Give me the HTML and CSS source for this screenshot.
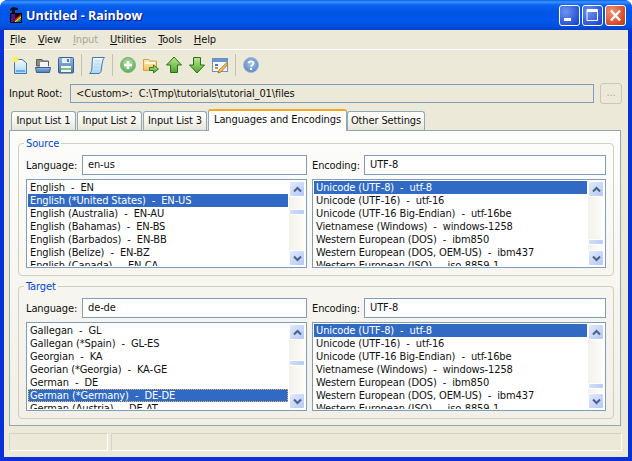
FILE: index.html
```html
<!DOCTYPE html>
<html lang="en">
<head>
    <meta charset="UTF-8">
    <meta name="viewport" content="width=device-width, initial-scale=1.0">
    <title>Untitled - Rainbow</title>
    <link rel="stylesheet" href="styles.css">
</head>
<body>
    <div class="window">
        <div class="titlebar">
            <svg class="app-icon" width="14" height="16" viewBox="0 0 14 16">
                <rect x="1" y="6" width="12" height="10" fill="#000"/>
                <path d="M3 15 L12 7 L12 9 L5 15Z" fill="#e02020"/>
                <path d="M5 15 L12 9 L12 11 L7 15Z" fill="#f0e020"/>
                <path d="M7 15 L12 11 L12 13 L9 15Z" fill="#20c040"/>
                <path d="M9 15 L12 13 L12 15Z" fill="#2040e0"/>
                <path d="M2 7 h4 v8 h-4z" fill="#601080"/>
                <path d="M1 2 L4 0 L9 1 L9 3 L6 3 L6 6 L3 6 L3 3 L1 4Z" fill="#111"/>
            </svg>
            <span class="title-text">Untitled - Rainbow</span>
            <div class="caption-buttons">
                <div class="caption-btn">
                    <svg width="19" height="19" viewBox="0 0 19 19"><rect x="4" y="12" width="7" height="3" fill="#fff"/></svg>
                </div>
                <div class="caption-btn">
                    <svg width="19" height="19" viewBox="0 0 19 19"><path d="M4 3.500h10.500v11h-10.500z M4 5.500h10.500" fill="none" stroke="#fff" stroke-width="1"/><rect x="4" y="4" width="11" height="2" fill="#fff"/></svg>
                </div>
                <div class="caption-btn close">
                    <svg width="19" height="19" viewBox="0 0 19 19"><path d="M5 4.500 L14 14.500 M14 4.500 L5 14.500" stroke="#fff" stroke-width="2.400" fill="none"/></svg>
                </div>
            </div>
        </div>

        <div class="client">
            <div class="menubar">
                <span class="menu-item"><u>F</u>ile</span>
                <span class="menu-item"><u>V</u>iew</span>
                <span class="menu-item disabled"><u>I</u>nput</span>
                <span class="menu-item"><u>U</u>tilities</span>
                <span class="menu-item"><u>T</u>ools</span>
                <span class="menu-item"><u>H</u>elp</span>
            </div>

            <div class="toolbar">
                <svg class="tool-icon" viewBox="0 0 16 18">
                    <defs>
                        <linearGradient id="paleBlue" x1="0" y1="0" x2="0" y2="1"><stop offset="0" stop-color="#f4fbff"/><stop offset="1" stop-color="#a9d6f3"/></linearGradient>
                        <linearGradient id="steel" x1="0" y1="0" x2="0" y2="1"><stop offset="0" stop-color="#9ab8dc"/><stop offset="1" stop-color="#4a78b4"/></linearGradient>
                        <linearGradient id="leaf" x1="0" y1="0" x2="0" y2="1"><stop offset="0" stop-color="#b8e890"/><stop offset="1" stop-color="#4fa52a"/></linearGradient>
                        <linearGradient id="amber" x1="0" y1="0" x2="0" y2="1"><stop offset="0" stop-color="#fff0b8"/><stop offset="1" stop-color="#f0c060"/></linearGradient>
                        <radialGradient id="bubble" cx="0.5" cy="0.4" r="0.6"><stop offset="0" stop-color="#c8e8b8"/><stop offset="1" stop-color="#58a850"/></radialGradient>
                        <radialGradient id="helpBall" cx="0.5" cy="0.4" r="0.6"><stop offset="0" stop-color="#a8c4e8"/><stop offset="1" stop-color="#5a86c4"/></radialGradient>
                    </defs>
                    <path d="M2.500 3.500H10L14.500 7V17.500H2.500Z" fill="url(#paleBlue)" stroke="#3f79b8"/>
                    <rect x="4" y="14" width="9" height="2" fill="#62b0e8"/>
                    <circle cx="3.500" cy="3.500" r="3" fill="#ffef60"/>
                </svg>
                <svg class="tool-icon" viewBox="0 0 16 18">
                    <path d="M1.500 3.500H7L8 5H13.500V10H1.500Z" fill="#8a8a84" stroke="#5c5c58"/>
                    <rect x="5" y="6" width="8" height="5" fill="#f4f4f0"/>
                    <path d="M0.500 11.500H15.500L14.500 16.500H1.500Z" fill="url(#steel)" stroke="#2f5f9c"/>
                </svg>
                <svg class="tool-icon" viewBox="0 0 16 18">
                    <rect x="0.500" y="1.500" width="15" height="15.500" rx="1" fill="url(#steel)" stroke="#2f5f9c"/>
                    <rect x="4" y="2" width="8" height="5" fill="#e8eef8"/>
                    <rect x="9" y="3" width="2" height="3" fill="#4a78b4"/>
                    <rect x="3" y="10" width="10" height="6" fill="#f4f8f0"/>
                    <rect x="3" y="12" width="10" height="2" fill="#8cc070"/>
                </svg>
                <div class="tool-sep"></div>
                <svg class="tool-icon" viewBox="0 0 16 18">
                    <path d="M3.500 1.500H15.500C14 3 13.500 5 13 8L12 15.500C11.800 17 10.500 17.500 9 17.500H0.500C2 16.500 2.500 15 2.800 13Z" fill="url(#paleBlue)" stroke="#3f79b8"/>
                    <path d="M6 5H11M5.500 8H10.500M5 11H10" stroke="#b4d2ec" stroke-width="1"/>
                </svg>
                <div class="tool-sep"></div>
                <svg class="tool-icon" viewBox="0 0 16 18">
                    <circle cx="8" cy="9" r="7.500" fill="url(#bubble)" stroke="#7cb878"/>
                    <path d="M8 5V13M4 9H12" stroke="#fff" stroke-width="2.600"/>
                </svg>
                <svg class="tool-icon" viewBox="0 0 16 18">
                    <path d="M0.500 3.500H6L7 5H13.500V14.500H0.500Z" fill="url(#amber)" stroke="#d8a040"/>
                    <rect x="2" y="6" width="10" height="2" fill="#fff8e0"/>
                    <path d="M6.500 11.500H10.500V9L15.500 13L10.500 17V14.500H6.500Z" fill="url(#leaf)" stroke="#3c7a28"/>
                </svg>
                <svg class="tool-icon" viewBox="0 0 16 18">
                    <path d="M8 1L15.500 9H11.500V16.500H4.500V9H0.500Z" fill="url(#leaf)" stroke="#2e7018"/>
                </svg>
                <svg class="tool-icon" viewBox="0 0 16 18">
                    <path d="M8 17L15.500 9H11.500V1.500H4.500V9H0.500Z" fill="url(#leaf)" stroke="#2e7018"/>
                </svg>
                <svg class="tool-icon" viewBox="0 0 16 18">
                    <rect x="0.500" y="2.500" width="15" height="13" fill="#f4f8fc" stroke="#6a90c0"/>
                    <rect x="1" y="3" width="14" height="3" fill="#6a96d0"/>
                    <rect x="3" y="8" width="3" height="2" fill="#4a78b4"/>
                    <rect x="3" y="11" width="3" height="2" fill="#f08030"/>
                    <path d="M15 6.500L16 8L9 16L6 17L7 14Z" fill="#f4c050" stroke="#a06820" stroke-width="0.800"/>
                </svg>
                <div class="tool-sep"></div>
                <svg class="tool-icon" viewBox="0 0 16 18">
                    <circle cx="8" cy="9" r="7.500" fill="url(#helpBall)" stroke="#9cb8dc"/>
                    <path d="M5.700 7.300C5.700 4.800 10.500 4.800 10.500 7.300C10.500 9 8.100 9 8.100 10.800" fill="none" stroke="#fff" stroke-width="1.800"/>
                    <rect x="7.100" y="12" width="2" height="2" fill="#fff"/>
                </svg>
            </div>

            <div class="root-row">
                <span class="root-label">Input Root:</span>
                <div class="root-field">&lt;Custom&gt;:&nbsp; C:\Tmp\tutorials\tutorial_01\files</div>
                <div class="browse-btn">...</div>
            </div>

            <div class="tabs">
                <div class="tab tab-list1">Input List 1</div>
                <div class="tab tab-list2">Input List 2</div>
                <div class="tab tab-list3">Input List 3</div>
                <div class="tab active">Languages and Encodings</div>
                <div class="tab tab-other">Other Settings</div>
            </div>

            <div class="panel">
                <fieldset class="group">
                    <legend>Source</legend>
                    <div class="group-grid">
                        <div class="field lang-field">
                            <label>Language:</label>
                            <div class="input">en-us</div>
                        </div>
                        <div class="field enc-field">
                            <label>Encoding:</label>
                            <div class="input">UTF-8</div>
                        </div>
                        <div class="listbox">
                            <div class="list-items">
                                <div class="row">English&nbsp; -&nbsp; EN</div>
                                <div class="row selected">English (*United States)&nbsp; -&nbsp; EN-US</div>
                                <div class="row">English (Australia)&nbsp; -&nbsp; EN-AU</div>
                                <div class="row">English (Bahamas)&nbsp; -&nbsp; EN-BS</div>
                                <div class="row">English (Barbados)&nbsp; -&nbsp; EN-BB</div>
                                <div class="row">English (Belize)&nbsp; -&nbsp; EN-BZ</div>
                                <div class="row">English (Canada)&nbsp; -&nbsp; EN-CA</div>
                            </div>
                            <div class="scrollbar">
                                <div class="sb-btn">
                                    <svg width="9" height="7" viewBox="0 0 9 7"><path d="M1 5.500L4.500 2L8 5.500" fill="none" stroke="#4d6185" stroke-width="2"/></svg>
                                </div>
                                <div class="thumb thumb-12"></div>
                                <div class="sb-btn">
                                    <svg width="9" height="7" viewBox="0 0 9 7"><path d="M1 1.500L4.500 5L8 1.500" fill="none" stroke="#4d6185" stroke-width="2"/></svg>
                                </div>
                            </div>
                        </div>
                        <div class="listbox">
                            <div class="list-items">
                                <div class="row selected">Unicode (UTF-8)&nbsp; -&nbsp; utf-8</div>
                                <div class="row">Unicode (UTF-16)&nbsp; -&nbsp; utf-16</div>
                                <div class="row">Unicode (UTF-16 Big-Endian)&nbsp; -&nbsp; utf-16be</div>
                                <div class="row">Vietnamese (Windows)&nbsp; -&nbsp; windows-1258</div>
                                <div class="row">Western European (DOS)&nbsp; -&nbsp; ibm850</div>
                                <div class="row">Western European (DOS, OEM-US)&nbsp; -&nbsp; ibm437</div>
                                <div class="row">Western European (ISO)&nbsp; -&nbsp; iso-8859-1</div>
                            </div>
                            <div class="scrollbar">
                                <div class="sb-btn">
                                    <svg width="9" height="7" viewBox="0 0 9 7"><path d="M1 5.500L4.500 2L8 5.500" fill="none" stroke="#4d6185" stroke-width="2"/></svg>
                                </div>
                                <div class="thumb thumb-42"></div>
                                <div class="sb-btn">
                                    <svg width="9" height="7" viewBox="0 0 9 7"><path d="M1 1.500L4.500 5L8 1.500" fill="none" stroke="#4d6185" stroke-width="2"/></svg>
                                </div>
                            </div>
                        </div>
                    </div>
                </fieldset>

                <fieldset class="group target">
                    <legend>Target</legend>
                    <div class="group-grid">
                        <div class="field lang-field">
                            <label>Language:</label>
                            <div class="input">de-de</div>
                        </div>
                        <div class="field enc-field">
                            <label>Encoding:</label>
                            <div class="input">UTF-8</div>
                        </div>
                        <div class="listbox">
                            <div class="list-items">
                                <div class="row">Gallegan&nbsp; -&nbsp; GL</div>
                                <div class="row">Gallegan (*Spain)&nbsp; -&nbsp; GL-ES</div>
                                <div class="row">Georgian&nbsp; -&nbsp; KA</div>
                                <div class="row">Georian (*Georgia)&nbsp; -&nbsp; KA-GE</div>
                                <div class="row">German&nbsp; -&nbsp; DE</div>
                                <div class="row selected focused">German (*Germany)&nbsp; -&nbsp; DE-DE</div>
                                <div class="row">German (Austria)&nbsp; -&nbsp; DE-AT</div>
                            </div>
                            <div class="scrollbar">
                                <div class="sb-btn">
                                    <svg width="9" height="7" viewBox="0 0 9 7"><path d="M1 5.500L4.500 2L8 5.500" fill="none" stroke="#4d6185" stroke-width="2"/></svg>
                                </div>
                                <div class="thumb thumb-20"></div>
                                <div class="sb-btn">
                                    <svg width="9" height="7" viewBox="0 0 9 7"><path d="M1 1.500L4.500 5L8 1.500" fill="none" stroke="#4d6185" stroke-width="2"/></svg>
                                </div>
                            </div>
                        </div>
                        <div class="listbox">
                            <div class="list-items">
                                <div class="row selected">Unicode (UTF-8)&nbsp; -&nbsp; utf-8</div>
                                <div class="row">Unicode (UTF-16)&nbsp; -&nbsp; utf-16</div>
                                <div class="row">Unicode (UTF-16 Big-Endian)&nbsp; -&nbsp; utf-16be</div>
                                <div class="row">Vietnamese (Windows)&nbsp; -&nbsp; windows-1258</div>
                                <div class="row">Western European (DOS)&nbsp; -&nbsp; ibm850</div>
                                <div class="row">Western European (DOS, OEM-US)&nbsp; -&nbsp; ibm437</div>
                                <div class="row">Western European (ISO)&nbsp; -&nbsp; iso-8859-1</div>
                            </div>
                            <div class="scrollbar">
                                <div class="sb-btn">
                                    <svg width="9" height="7" viewBox="0 0 9 7"><path d="M1 5.500L4.500 2L8 5.500" fill="none" stroke="#4d6185" stroke-width="2"/></svg>
                                </div>
                                <div class="thumb thumb-43"></div>
                                <div class="sb-btn">
                                    <svg width="9" height="7" viewBox="0 0 9 7"><path d="M1 1.500L4.500 5L8 1.500" fill="none" stroke="#4d6185" stroke-width="2"/></svg>
                                </div>
                            </div>
                        </div>
                    </div>
                </fieldset>
            </div>

            <div class="statusbar">
                <div class="status-pane first"></div>
                <div class="status-pane second"></div>
            </div>
        </div>
    </div>
</body>
</html>
```

FILE: styles.css
```css
* {
    box-sizing: border-box;
}

body {
    margin: 0;
    overflow: hidden;
    background-color: #fff;
    font-family: "DejaVu Sans", sans-serif;
    font-stretch: condensed;
    font-size: 11px;
    letter-spacing: -0.120px;
    color: #111;
}

.window {
    width: 632px;
    height: 461px;
    display: flex;
    flex-direction: column;
    background-color: #0831d9;
    border-radius: 8px 8px 0 0;
    overflow: hidden;
}

/* title bar */
.titlebar {
    height: 30px;
    flex: none;
    display: flex;
    align-items: center;
    padding: 0 6px 0 9px;
    background: linear-gradient(to bottom, #0a5fe8 0, #3a93ff 2px, #0a62f0 5px, #0055e5 12px, #0058ee 20px, #0050dc 26px, #0240cc 30px);
}

.app-icon {
    margin-right: 3px;
    flex: none;
}

.title-text {
    font-family: "Open Sans", sans-serif;
    font-stretch: normal;
    font-size: 12.500px;
    font-weight: 700;
    letter-spacing: 0;
    color: #fff;
    text-shadow: 1px 1px 1px #0f1089;
    flex: 1;
}

.caption-buttons {
    display: flex;
    gap: 2px;
}

.caption-btn {
    width: 21px;
    height: 21px;
    border: 1px solid #fff;
    border-radius: 3px;
    display: flex;
    align-items: center;
    justify-content: center;
    background: radial-gradient(circle at 30% 30%, #6f94ee, #2a55d8 70%, #1c3fc0);
}

.caption-btn.close {
    background: radial-gradient(circle at 30% 30%, #ee9478, #dc5330 60%, #b83818);
}

/* client area */
.client {
    flex: 1;
    margin: 0 4px 4px;
    background-color: #ece9d8;
    display: flex;
    flex-direction: column;
}

.menubar {
    height: 20px;
    flex: none;
    display: flex;
    align-items: center;
    padding-left: 6px;
    gap: 12px;
    border-bottom: 1px solid #fff;
}

.menu-item.disabled {
    color: #a8a799;
}

.toolbar {
    height: 30px;
    flex: none;
    display: flex;
    align-items: center;
    gap: 7px;
    padding-left: 8px;
}

.tool-icon {
    width: 16px;
    height: 18px;
    flex: none;
}

.tool-sep {
    width: 1px;
    height: 22px;
    background-color: #c5c2b0;
}

.root-row {
    height: 21px;
    margin-top: 3px;
    flex: none;
    display: flex;
    align-items: center;
    padding-left: 5px;
}

.root-label {
    width: 61px;
    flex: none;
}

.root-field {
    width: 524px;
    height: 19px;
    border: 1px solid #7f9db9;
    line-height: 17px;
    padding-left: 5px;
}

.browse-btn {
    width: 22px;
    height: 21px;
    margin-left: 6px;
    border: 1px solid #c9c7ba;
    border-radius: 3px;
    color: #a8a799;
    text-align: center;
    line-height: 17px;
}

/* tabs */
.tabs {
    height: 21px;
    margin-top: 5px;
    padding-left: 7px;
    flex: none;
    display: flex;
    align-items: flex-end;
    gap: 1px;
    position: relative;
    z-index: 1;
}

.tab {
    height: 19px;
    border: 1px solid #91a7b4;
    border-bottom: none;
    border-radius: 3px 3px 0 0;
    background: linear-gradient(to bottom, #fff, #f3f2ea 60%, #e6e4d6);
    text-align: center;
    line-height: 18px;
    white-space: nowrap;
}

.tab-list1 {
    width: 65px;
}

.tab-list2 {
    width: 65px;
}

.tab-list3 {
    width: 64px;
}

.tab-other {
    width: 78px;
    margin-left: -1px;
}

.tab.active {
    width: 139px;
    height: 22px;
    margin-bottom: -1px;
    background: #fdfdfc;
    border-top: 2px solid #f5a623;
    line-height: 18px;
}

.panel {
    width: 612px;
    height: 296px;
    margin-left: 5px;
    flex: none;
    border: 1px solid #91a7b4;
    background: linear-gradient(to bottom, #fdfdfc, #f1efe6);
    padding: 6px 6px 0 8px;
}

.group {
    margin: 0;
    padding: 5px 7px 0 7px;
    height: 139px;
    border: 1px solid #d0d0bf;
    border-radius: 4px;
}

.group.target {
    margin-top: 4px;
    height: 139px;
}

.group legend {
    padding: 0 2px;
    margin-left: -2px;
    color: #0046d5;
    line-height: 13px;
}

.group-grid {
    display: grid;
    grid-template-columns: 281px 294px;
    column-gap: 5px;
    row-gap: 4px;
}

.field {
    display: flex;
    align-items: center;
    height: 20px;
}

.field label {
    flex: none;
}

.lang-field label {
    width: 56px;
}

.enc-field label {
    width: 52px;
}

.input {
    flex: 1;
    height: 20px;
    background-color: #fff;
    border: 1px solid #7f9db9;
    line-height: 18px;
    padding-left: 5px;
}

.listbox {
    height: 89px;
    border: 1px solid #7f9db9;
    background-color: #fff;
    display: flex;
    padding: 1px;
    overflow: hidden;
}

.list-items {
    flex: 1;
    overflow: hidden;
    min-width: 0;
}

.row {
    height: 13px;
    line-height: 13px;
    padding-left: 2px;
    white-space: nowrap;
}

.row.selected {
    background-color: #316ac5;
    color: #fff;
}

.row.focused {
    outline: 1px dotted #e2b868;
    outline-offset: -1px;
}

.scrollbar {
    width: 16px;
    margin-left: 1px;
    flex: none;
    display: flex;
    flex-direction: column;
    justify-content: space-between;
    background: linear-gradient(to right, #f3f1ec, #fdfdfa);
    position: relative;
}

.sb-btn {
    width: 16px;
    height: 16px;
    border: 1px solid #fff;
    border-radius: 2px;
    display: flex;
    align-items: center;
    justify-content: center;
    background: linear-gradient(135deg, #e1eafe, #b4c8f6);
}

/* thumb floats over the track, top is where the list is scrolled to */
.thumb {
    position: absolute;
    left: 0;
    width: 16px;
    height: 6px;
    border: 1px solid #fff;
    border-radius: 2px;
    background: linear-gradient(to right, #d0dcfa, #b8ccf6);
}

.thumb-12 { top: 28px; }
.thumb-42 { top: 58px; }
.thumb-20 { top: 36px; }
.thumb-43 { top: 59px; }

/* status bar */
.statusbar {
    height: 18px;
    margin-top: 7px;
    padding-left: 5px;
    flex: none;
    display: flex;
    gap: 3px;
}

.status-pane {
    border: 1px solid #d6d3c2;
    border-bottom-color: #fff;
    border-right-color: #fff;
}

.status-pane.first {
    width: 99px;
}

.status-pane.second {
    width: 511px;
}
```
